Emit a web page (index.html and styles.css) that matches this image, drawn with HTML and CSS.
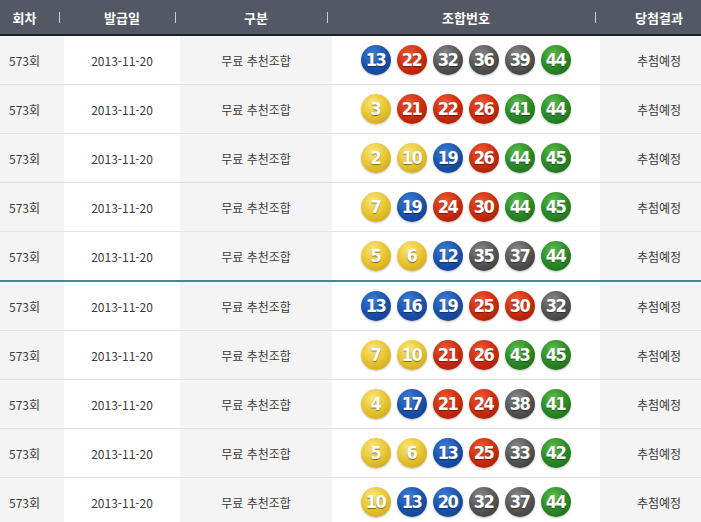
FILE: index.html
```html
<!DOCTYPE html>
<html lang="ko">
<head>
<meta charset="utf-8">
<link rel="stylesheet" href="styles.css">
</head>
<body>
<div class="wrap">
<table class="tbl">
<colgroup>
<col class="c1"><col class="c2"><col class="c3"><col class="c4"><col class="c5">
</colgroup>
<thead>
<tr><th class="sep">회차</th><th class="sep">발급일</th><th class="sep">구분</th><th class="sep">조합번호</th><th>당첨결과</th></tr>
</thead>
<tbody>
<tr><td class="g">573회</td><td>2013-11-20</td><td class="g">무료 추천조합</td><td><span class="b bl">13</span><span class="b rd">22</span><span class="b gy">32</span><span class="b gy">36</span><span class="b gy">39</span><span class="b gr">44</span></td><td class="g">추첨예정</td></tr>
<tr><td class="g">573회</td><td>2013-11-20</td><td class="g">무료 추천조합</td><td><span class="b ye">3</span><span class="b rd">21</span><span class="b rd">22</span><span class="b rd">26</span><span class="b gr">41</span><span class="b gr">44</span></td><td class="g">추첨예정</td></tr>
<tr><td class="g">573회</td><td>2013-11-20</td><td class="g">무료 추천조합</td><td><span class="b ye">2</span><span class="b ye">10</span><span class="b bl">19</span><span class="b rd">26</span><span class="b gr">44</span><span class="b gr">45</span></td><td class="g">추첨예정</td></tr>
<tr><td class="g">573회</td><td>2013-11-20</td><td class="g">무료 추천조합</td><td><span class="b ye">7</span><span class="b bl">19</span><span class="b rd">24</span><span class="b rd">30</span><span class="b gr">44</span><span class="b gr">45</span></td><td class="g">추첨예정</td></tr>
<tr class="split"><td class="g">573회</td><td>2013-11-20</td><td class="g">무료 추천조합</td><td><span class="b ye">5</span><span class="b ye">6</span><span class="b bl">12</span><span class="b gy">35</span><span class="b gy">37</span><span class="b gr">44</span></td><td class="g">추첨예정</td></tr>
<tr><td class="g">573회</td><td>2013-11-20</td><td class="g">무료 추천조합</td><td><span class="b bl">13</span><span class="b bl">16</span><span class="b bl">19</span><span class="b rd">25</span><span class="b rd">30</span><span class="b gy">32</span></td><td class="g">추첨예정</td></tr>
<tr><td class="g">573회</td><td>2013-11-20</td><td class="g">무료 추천조합</td><td><span class="b ye">7</span><span class="b ye">10</span><span class="b rd">21</span><span class="b rd">26</span><span class="b gr">43</span><span class="b gr">45</span></td><td class="g">추첨예정</td></tr>
<tr><td class="g">573회</td><td>2013-11-20</td><td class="g">무료 추천조합</td><td><span class="b ye">4</span><span class="b bl">17</span><span class="b rd">21</span><span class="b rd">24</span><span class="b gy">38</span><span class="b gr">41</span></td><td class="g">추첨예정</td></tr>
<tr><td class="g">573회</td><td>2013-11-20</td><td class="g">무료 추천조합</td><td><span class="b ye">5</span><span class="b ye">6</span><span class="b bl">13</span><span class="b rd">25</span><span class="b gy">33</span><span class="b gr">42</span></td><td class="g">추첨예정</td></tr>
<tr><td class="g">573회</td><td>2013-11-20</td><td class="g">무료 추천조합</td><td><span class="b ye">10</span><span class="b bl">13</span><span class="b bl">20</span><span class="b gy">32</span><span class="b gy">37</span><span class="b gr">44</span></td><td class="g">추첨예정</td></tr>
</tbody>
</table>
</div>
</body>
</html>
```
FILE: styles.css
```css
html, body {
  margin: 0;
  padding: 0;
  background: #fff;
}
body {
  width: 701px;
  height: 522px;
  overflow: hidden;
  font-family: "Noto Sans CJK KR", "Liberation Sans", sans-serif;
}
.wrap {
  margin-left: -15px;
  width: 733px;
}
.tbl {
  border-collapse: collapse;
  table-layout: fixed;
  width: 733px;
}
.c1 { width: 79px; }
.c2 { width: 116px; }
.c3 { width: 152px; }
.c4 { width: 268px; }
.c5 { width: 118px; }
.tbl th {
  height: 34px;
  padding: 0;
  background: #545865;
  color: #fff;
  font-size: 13px;
  font-weight: bold;
  text-align: center;
  border-bottom: 2px solid #1f2126;
  position: relative;
}
.tbl th.sep::after {
  content: "";
  position: absolute;
  right: 4px;
  top: 12px;
  width: 1px;
  height: 11px;
  background: #c9cbd1;
}
.tbl td {
  height: 48px;
  padding: 0;
  text-align: center;
  font-size: 12px;
  color: #3a3a3a;
  border-bottom: 1px solid #e2e2e2;
  white-space: nowrap;
}
.tbl td.g {
  background: #f4f4f4;
}
.tbl tr.split td {
  border-bottom: 2px solid #3b8e8f;
}
.b {
  display: inline-block;
  width: 30px;
  height: 30px;
  margin: 0 3px;
  border-radius: 50%;
  vertical-align: middle;
  color: #fff;
  font-family: "DejaVu Sans Condensed", "DejaVu Sans", sans-serif;
  font-stretch: condensed;
  font-weight: bold;
  font-size: 18px;
  line-height: 30px;
  letter-spacing: -1.5px;
  text-indent: -1px;
  text-align: center;
  text-shadow: 0 1px 1px rgba(0,0,0,0.45);
  box-shadow: 0 1px 2px rgba(0,0,0,0.25);
}
.bl { background: radial-gradient(circle at 40% 30%, #3f7fd6 0%, #1a52ac 50%, #0d3a85 100%); }
.rd { background: radial-gradient(circle at 40% 30%, #ee5a34 0%, #cc2c0e 50%, #961b05 100%); }
.gy { background: radial-gradient(circle at 40% 30%, #8a8a8a 0%, #555 50%, #333 100%); }
.gr { background: radial-gradient(circle at 40% 30%, #5cbc4c 0%, #2b8a27 50%, #196116 100%); }
.ye { background: radial-gradient(circle at 40% 30%, #fbe67a 0%, #e7c330 50%, #c49c12 100%); }
```
